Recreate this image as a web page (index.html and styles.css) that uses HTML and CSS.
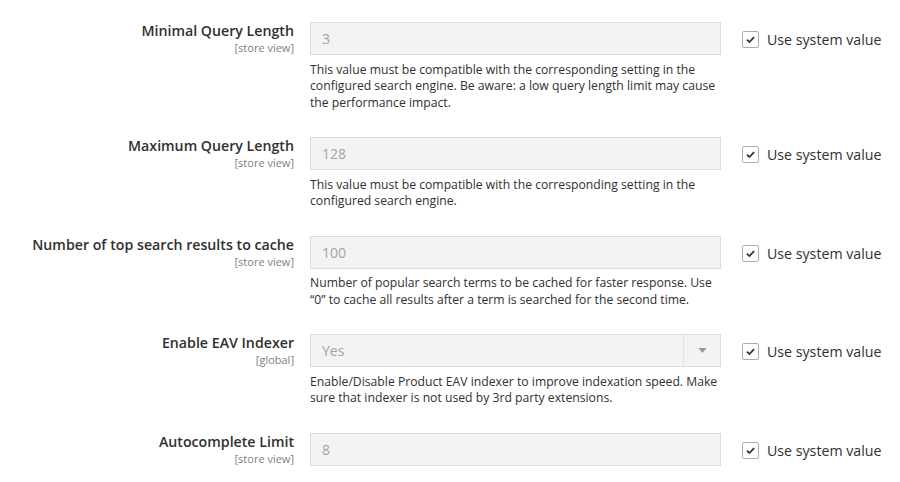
FILE: index.html
```html
<!DOCTYPE html>
<html>
<head>
<meta charset="utf-8">
<link rel="stylesheet" href="styles.css">
</head>
<body>
<div class="form">
  <div class="row">
    <div class="label"><span class="title">Minimal Query Length</span><span class="scope">[store view]</span></div>
    <div class="field">
      <div class="input">3</div>
      <p class="note">This value must be compatible with the corresponding setting in the configured search engine. Be aware: a low query length limit may cause the performance impact.</p>
    </div>
    <label class="system"><span class="check"><svg viewBox="0 0 16 16" width="16" height="16"><path d="M3.6 8.2 L6.6 11.1 L12.4 5" fill="none" stroke="#333" stroke-width="2.2"/></svg></span>Use system value</label>
  </div>
  <div class="row">
    <div class="label"><span class="title">Maximum Query Length</span><span class="scope">[store view]</span></div>
    <div class="field">
      <div class="input">128</div>
      <p class="note">This value must be compatible with the corresponding setting in the configured search engine.</p>
    </div>
    <label class="system"><span class="check"><svg viewBox="0 0 16 16" width="16" height="16"><path d="M3.6 8.2 L6.6 11.1 L12.4 5" fill="none" stroke="#333" stroke-width="2.2"/></svg></span>Use system value</label>
  </div>
  <div class="row">
    <div class="label"><span class="title">Number of top search results to cache</span><span class="scope">[store view]</span></div>
    <div class="field">
      <div class="input">100</div>
      <p class="note">Number of popular search terms to be cached for faster response. Use “0” to cache all results after a term is searched for the second time.</p>
    </div>
    <label class="system"><span class="check"><svg viewBox="0 0 16 16" width="16" height="16"><path d="M3.6 8.2 L6.6 11.1 L12.4 5" fill="none" stroke="#333" stroke-width="2.2"/></svg></span>Use system value</label>
  </div>
  <div class="row">
    <div class="label"><span class="title">Enable EAV Indexer</span><span class="scope">[global]</span></div>
    <div class="field">
      <div class="input select"><span>Yes</span><span class="arrow"><svg viewBox="0 0 10 6" width="9" height="5"><path d="M0 0 H10 L5 6 Z" fill="#9a9a9a"/></svg></span></div>
      <p class="note">Enable/Disable Product EAV indexer to improve indexation speed. Make sure that indexer is not used by 3rd party extensions.</p>
    </div>
    <label class="system"><span class="check"><svg viewBox="0 0 16 16" width="16" height="16"><path d="M3.6 8.2 L6.6 11.1 L12.4 5" fill="none" stroke="#333" stroke-width="2.2"/></svg></span>Use system value</label>
  </div>
  <div class="row">
    <div class="label"><span class="title">Autocomplete Limit</span><span class="scope">[store view]</span></div>
    <div class="field">
      <div class="input">8</div>
    </div>
    <label class="system"><span class="check"><svg viewBox="0 0 16 16" width="16" height="16"><path d="M3.6 8.2 L6.6 11.1 L12.4 5" fill="none" stroke="#333" stroke-width="2.2"/></svg></span>Use system value</label>
  </div>
</div>
</body>
</html>
```
FILE: styles.css
```css
html, body {
  margin: 0;
  padding: 0;
  background: #fff;
}
body {
  font-family: "Open Sans", "Liberation Sans", sans-serif;
  color: #303030;
}
.form {
  padding-top: 22px;
  display: flex;
  flex-direction: column;
  gap: 26px;
}
.row {
  display: grid;
  grid-template-columns: 294px 411px auto;
  column-gap: 16px;
  align-items: start;
}
.label {
  display: flex;
  flex-direction: column;
  align-items: flex-end;
  text-align: right;
}
.title {
  font-size: 14.2px;
  font-weight: 600;
  line-height: 18px;
  color: #303030;
}
.scope {
  font-size: 11px;
  line-height: 13px;
  color: #808080;
  margin-top: 1px;
}
.input {
  box-sizing: border-box;
  height: 33px;
  border: 1px solid #dcdcdc;
  background: #f3f3f3;
  color: #a3a3a3;
  font-size: 14px;
  line-height: 31px;
  padding: 0 11px;
}
.select {
  display: flex;
  justify-content: space-between;
  padding-right: 0;
}
.arrow {
  width: 36px;
  border-left: 1px solid #e2e2e2;
  display: flex;
  align-items: center;
  justify-content: center;
}
.note {
  margin: 6.5px 0 0;
  font-size: 12.2px;
  line-height: 16.5px;
  color: #303030;
}
.system {
  display: flex;
  align-items: center;
  gap: 8px;
  font-size: 14.2px;
  color: #303030;
  height: 33px;
  margin-left: 5px;
  margin-top: 1px;
}
.check {
  box-sizing: border-box;
  width: 17px;
  height: 17px;
  border: 1px solid #adadad;
  border-radius: 2px;
  background: #fff;
  display: flex;
  align-items: center;
  justify-content: center;
}
.check svg {
  width: 13px;
  height: 13px;
}
```
